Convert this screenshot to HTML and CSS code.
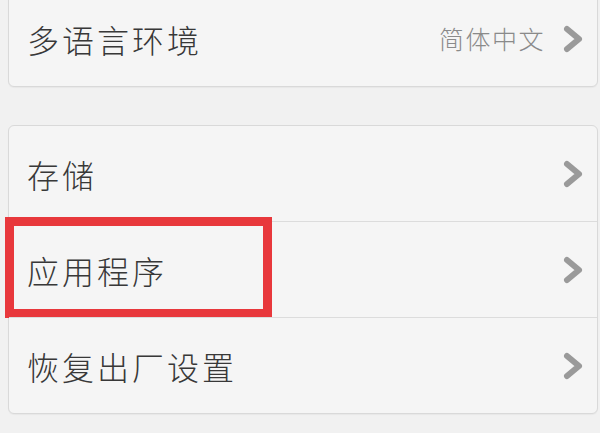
FILE: index.html
```html
<!DOCTYPE html>
<html lang="zh-CN">
<head>
<meta charset="utf-8">
<link rel="stylesheet" href="styles.css">
</head>
<body>
<div class="page">
  <div class="card card-top">
    <div class="row">
      <span class="label">多语言环境</span>
      <span class="value">简体中文</span>
      <svg class="chev" viewBox="0 0 20 28" width="20" height="28"><polyline points="4,4 16,14 4,24" fill="none" stroke="#9a9a9a" stroke-width="6" stroke-linecap="round" stroke-linejoin="round"/></svg>
    </div>
  </div>
  <div class="card card-main">
    <div class="row">
      <span class="label">存储</span>
      <svg class="chev" viewBox="0 0 20 28" width="20" height="28"><polyline points="4,4 16,14 4,24" fill="none" stroke="#9a9a9a" stroke-width="6" stroke-linecap="round" stroke-linejoin="round"/></svg>
    </div>
    <div class="row highlighted">
      <span class="label">应用程序</span>
      <svg class="chev" viewBox="0 0 20 28" width="20" height="28"><polyline points="4,4 16,14 4,24" fill="none" stroke="#9a9a9a" stroke-width="6" stroke-linecap="round" stroke-linejoin="round"/></svg>
      <div class="mark"></div>
    </div>
    <div class="row">
      <span class="label">恢复出厂设置</span>
      <svg class="chev" viewBox="0 0 20 28" width="20" height="28"><polyline points="4,4 16,14 4,24" fill="none" stroke="#9a9a9a" stroke-width="6" stroke-linecap="round" stroke-linejoin="round"/></svg>
    </div>
  </div>
</div>
</body>
</html>
```
FILE: styles.css
```css
html, body {
  margin: 0;
  padding: 0;
  background: #f1f1f1;
  width: 600px;
  height: 433px;
  overflow: hidden;
}
.page {
  padding: 0 2px 0 8px;
  font-family: "Noto Sans CJK SC", "Noto Sans", sans-serif;
}
.card {
  background: #f5f5f5;
  border: 1px solid #d9d9d9;
  border-radius: 6px;
  box-shadow: 0 1px 1px rgba(0,0,0,0.04);
}
.card-top {
  margin-top: -10px;
}
.card-main {
  margin-top: 38px;
}
.row {
  position: relative;
  height: 95px;
  display: flex;
  align-items: center;
  padding: 0 14px 0 18px;
}
.card-main .row + .row {
  border-top: 1px solid #dcdcdc;
}
.label {
  flex: 1;
  font-size: 32px;
  font-weight: 300;
  letter-spacing: 3px;
  color: #383838;
  line-height: 1;
}
.value {
  font-size: 25px;
  font-weight: 300;
  letter-spacing: 1.5px;
  color: #8a8a8a;
  margin-right: 18px;
  line-height: 1;
}
.chev {
  display: block;
  flex: none;
}
.mark {
  position: absolute;
  left: -4px;
  top: -5px;
  width: 249px;
  height: 83px;
  border: 9px solid #e8383c;
}
```
